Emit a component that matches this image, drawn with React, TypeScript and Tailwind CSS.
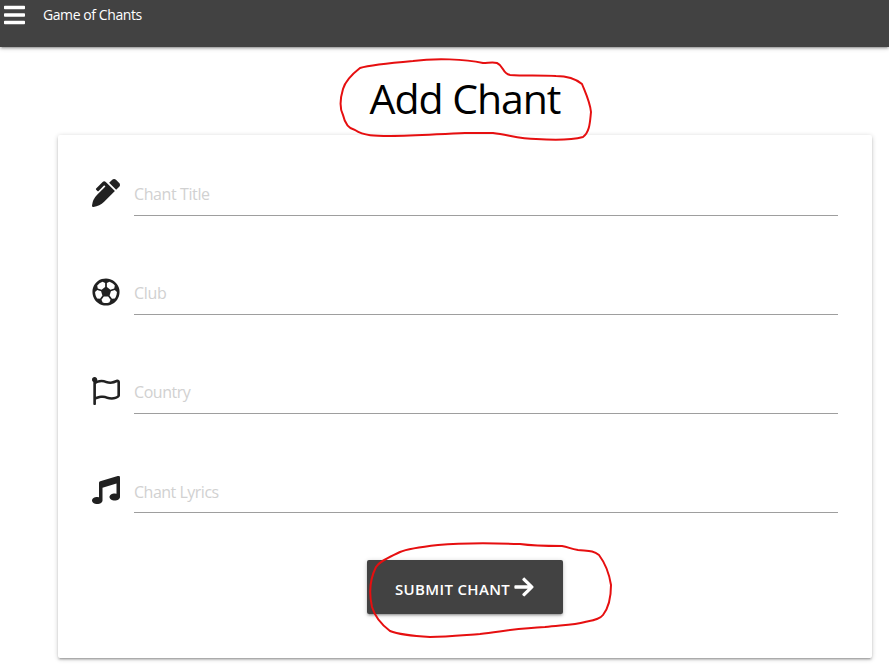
import type { ReactNode } from "react";
import { FaArrowRight, FaBars, FaMusic, FaPenAlt, FaRegFlag, FaRegFutbol } from "react-icons/fa";

type FieldProps = { icon: ReactNode; label: string; labelClass: string };

function Field({ icon, label, labelClass }: FieldProps) {
  return (
    <div className="flex h-[45px] items-start text-[#212121]">
      <span className="mt-[8px] w-[42px] shrink-0 text-[28px]">{icon}</span>
      <label className="flex h-[45px] flex-1 items-center border-b border-[#9e9e9e] pt-[1px] text-[16px] text-[#d1d1d1]">
        <span className={labelClass}>{label}</span>
      </label>
    </div>
  );
}

export default function App() {
  return (
    <div className="relative h-[666px] w-full overflow-hidden bg-white font-['Open_Sans','Noto_Sans',sans-serif]">
      <header className="flex h-[47px] items-start bg-[#424242] text-white shadow-[0_2px_2px_0_rgba(0,0,0,0.14),0_3px_1px_-2px_rgba(0,0,0,0.12),0_1px_5px_0_rgba(0,0,0,0.2)]">
        <FaBars className="ml-[4px] mt-[3px] h-[24px] w-[21px]" preserveAspectRatio="none" />
        <span className="ml-[18px] mt-[4px] text-[14px] leading-[21px] tracking-[-0.42px]">Game of Chants</span>
      </header>
      <main className="ml-[58px] w-[814px]">
        <h1 className="flex h-[88px] items-center justify-center pt-[14px] text-[41px] leading-none tracking-[-1.05px] text-black">
          Add Chant
        </h1>
        <form className="flex h-[523px] flex-col rounded-[2px] bg-white pl-[34px] pr-[34px] pt-[36px] shadow-[0_2px_2px_0_rgba(0,0,0,0.14),0_3px_1px_-2px_rgba(0,0,0,0.12),0_1px_5px_0_rgba(0,0,0,0.2)]">
          <div className="flex flex-col gap-[54px]">
            <Field icon={<FaPenAlt />} label="Chant Title" labelClass="tracking-[-0.4px]" />
            <Field icon={<FaRegFutbol />} label="Club" labelClass="tracking-[-0.3px]" />
            <Field icon={<FaRegFlag />} label="Country" labelClass="tracking-[-0.45px]" />
            <Field icon={<FaMusic />} label="Chant Lyrics" labelClass="mt-[2px] tracking-[-0.5px]" />
          </div>
          <button
            type="button"
            className="ml-[275px] mt-[47px] flex h-[54px] w-[196px] items-center rounded-[2px] bg-[#424242] pl-[28px] text-white shadow-[0_2px_2px_0_rgba(0,0,0,0.14),0_3px_1px_-2px_rgba(0,0,0,0.12),0_1px_5px_0_rgba(0,0,0,0.2)]"
          >
            <span className="mt-[4px] w-[118px] whitespace-nowrap text-left text-[15px] font-semibold leading-none tracking-[0.35px]">SUBMIT CHANT</span>
            <FaArrowRight className="size-[22px]" />
          </button>
        </form>
      </main>
      <svg className="pointer-events-none absolute left-0 top-0" width="889" height="666" fill="none" stroke="#e60f10" strokeWidth="2" strokeLinecap="round" strokeLinejoin="round">
        <path d="M483 63 C465 59 435 58 413 61 C390 63 370 65 360 68 C351 75 345 82 343 89 C340 99 340 109 343 115 C345 124 350 129 355 130 C364 136 375 136 390 136 C415 136 438 134 465 133 L493 133 C509 135 520 139 536 139 C551 140 572 140 583 137 C590 132 590 121 591 112 C590 102 586 94 582 84 C576 79 567 76 556 76 C540 75 525 76 510 75 C502 73 504 66 497 63 C493 62 488 63 483 63" />
        <path d="M562 546 C544 546 534 546 520 544 C490 543 460 543 438 545 C420 547 407 549 400 552 C388 558 380 561 376 567 C370 579 369 594 372 607 C375 617 382 625 390 631 C400 635 413 636 430 637 C448 637 465 635 480 634 C505 631 520 628 545 627 C563 625 574 625 585 622 C594 620 600 619 603 615 C610 606 611 594 611 585 C609 572 605 563 599 555 C593 550 588 551 578 550 C570 549 569 547 562 546" />
      </svg>
    </div>
  );
}
